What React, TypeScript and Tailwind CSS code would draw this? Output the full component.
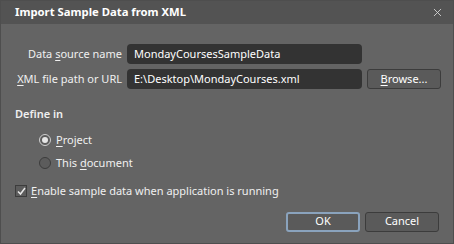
import { X } from 'lucide-react';

const U = ({ children }: { children: string }) => <span className="underline underline-offset-2">{children}</span>;

export default function App() {
  return (
    <div
      className="w-[454px] h-[244px] flex flex-col bg-[#646464] border border-[#4e4e4e] text-[11px] text-[#f0f0f0] overflow-hidden whitespace-nowrap"
      style={{ fontFamily: '"Noto Sans", "Open Sans", sans-serif' }}
    >
      <div className="h-[23px] shrink-0 flex items-center justify-between bg-[#535353] pl-[14px] pr-[9px]">
        <span className="text-[11.3px] font-bold text-white">Import Sample Data from XML</span>
        <X className="w-[13px] h-[13px] text-[#d8d8d8]" strokeWidth={1.6} />
      </div>

      <div className="flex flex-col pt-[20px] px-[14px]">
        <div className="grid grid-cols-[107px_235px_auto] gap-x-[5px] gap-y-[5px] items-center">
          <span className="text-right">
            Data <U>s</U>ource name
          </span>
          <div className="h-[20px] rounded-[4px] bg-[#333333] flex items-center px-[7px] text-white">MondayCoursesSampleData</div>
          <div />
          <span className="text-right">
            <U>X</U>ML file path or URL
          </span>
          <div className="h-[20px] rounded-[4px] bg-[#333333] flex items-center px-[7px] text-white">E:\Desktop\MondayCourses.xml</div>
          <button className="w-[74px] h-[20px] rounded-[3px] border border-[#3c3c3c] bg-[#5a5a5a] text-white flex items-center justify-center">
            <U>B</U>rowse...
          </button>
        </div>

        <div className="mt-[17px] font-semibold">Define in</div>
        <div className="flex flex-col pl-[24px] gap-[8px] mt-[10px]">
          <label className="flex items-center gap-[5px] h-[15px]">
            <span className="w-[12px] h-[12px] rounded-full border border-[#cfcfcf] bg-[#5c5c5c] flex items-center justify-center">
              <span className="w-[6px] h-[6px] rounded-full bg-[#e6e6e6]" />
            </span>
            <span>
              <U>P</U>roject
            </span>
          </label>
          <label className="flex items-center gap-[5px] h-[15px]">
            <span className="w-[12px] h-[12px] rounded-full border border-[#3c3c3c] bg-[#5c5c5c]" />
            <span>
              This <U>d</U>ocument
            </span>
          </label>
        </div>

        <label className="flex items-center gap-[4px] mt-[13px] h-[15px]">
          <span className="w-[12px] h-[12px] border border-[#3c3c3c] bg-[#5c5c5c] flex items-center justify-center">
            <svg width="9" height="9" viewBox="0 0 9 9">
              <path d="M1 4.5 L3.5 7 L8 1" fill="none" stroke="#e8e8e8" strokeWidth="1.5" />
            </svg>
          </span>
          <span>
            <U>E</U>nable sample data when application is running
          </span>
        </label>

        <div className="flex justify-end gap-[5px] mt-[13px]">
          <button className="w-[74px] h-[20px] rounded-[3px] border-2 border-[#8aa3bd] bg-[#5a5a5a] text-white flex items-center justify-center">
            OK
          </button>
          <button className="w-[74px] h-[20px] rounded-[3px] border border-[#3c3c3c] bg-[#5a5a5a] text-white flex items-center justify-center">
            Cancel
          </button>
        </div>
      </div>
    </div>
  );
}
